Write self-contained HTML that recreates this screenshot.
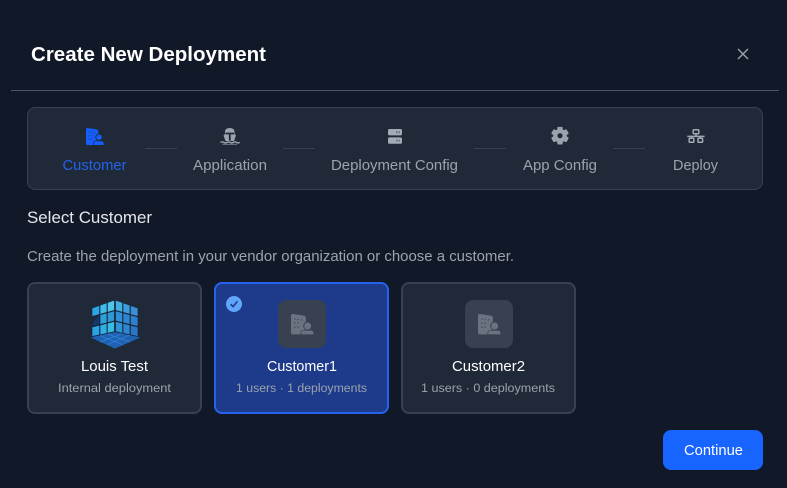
<!DOCTYPE html>
<html lang="en">
<head>
<meta charset="utf-8">
<title>Create New Deployment</title>
<style>
html,body{margin:0;padding:0;background:#111827;width:787px;height:488px;overflow:hidden}
svg{display:block}
text{font-family:"Liberation Sans",sans-serif;white-space:pre}
</style>
</head>
<body>
<svg width="787" height="488" viewBox="0 0 787 488" xmlns="http://www.w3.org/2000/svg">
<defs>
<g id="bld">
<path d="M0 1.5Q0 0 1.5 0L10.5 1.4Q12.4 1.7 12.4 3.2V17H1.5Q0 17 0 15.5Z" fill="currentColor"/>
</g>
</defs>
<rect width="787" height="488" fill="#111827"/>
<text x="31" y="61" font-size="20.6" font-weight="700" fill="#fff" textLength="235" lengthAdjust="spacingAndGlyphs">Create New Deployment</text>
<path d="M738 49L748 59M748 49L738 59" stroke="#9ca3af" stroke-width="1.4" fill="none"/>
<rect x="11" y="90" width="768" height="1" fill="#4b5563"/>

<!-- stepper -->
<rect x="27.5" y="107.5" width="735" height="82" rx="8" fill="#1f2937" stroke="#374151"/>
<g fill="#374151">
<rect x="145" y="148" width="32" height="1"/>
<rect x="283" y="148" width="32" height="1"/>
<rect x="474" y="148" width="32" height="1"/>
<rect x="613" y="148" width="32" height="1"/>
</g>
<g font-size="14.6" fill="#9ca3af">
<text x="62.5" y="170" fill="#2563eb" textLength="64" lengthAdjust="spacingAndGlyphs">Customer</text>
<text x="193" y="170" textLength="74" lengthAdjust="spacingAndGlyphs">Application</text>
<text x="331" y="170" textLength="127" lengthAdjust="spacingAndGlyphs">Deployment Config</text>
<text x="523" y="170" textLength="74" lengthAdjust="spacingAndGlyphs">App Config</text>
<text x="673" y="170" textLength="45" lengthAdjust="spacingAndGlyphs">Deploy</text>
</g>

<!-- customer icon -->
<g transform="translate(86 128)" color="#155dfc">
<use href="#bld"/>
<g fill="#1f4fa8"><rect x="2.6" y="3.6" width="1.4" height="1.4"/><rect x="5.4" y="3.9" width="1.4" height="1.4"/><rect x="8.2" y="4.3" width="1.4" height="1.4"/><rect x="2.6" y="7" width="1.4" height="1.4"/><rect x="5.4" y="7" width="1.4" height="1.4"/><rect x="2.6" y="10.4" width="1.4" height="1.4"/><rect x="5.4" y="10.4" width="1.4" height="1.4"/></g>
<circle cx="13" cy="9.2" r="3.2" fill="#155dfc" stroke="#1f2937" stroke-width=".9"/>
<path d="M7.4 17.3V16Q7.4 12.9 10.4 12.9H15.4Q18 12.9 18 16V17.3Z" fill="#155dfc" stroke="#1f2937" stroke-width=".7"/>
</g>

<!-- ship icon -->
<g>
<path d="M223.5 135.5L225 134V132Q225 128 229.7 128Q234.5 128 234.5 132V134L236 135.5L234 141H225.5Z" fill="#9ca3af"/>
<path d="M225.5 132.6H234V134.4H230.7V140.6H228.9V134.4H225.5Z" fill="#1f2937"/>
<path d="M220.5 142.4Q222.1 141.4 223.7 142.4T226.9 142.4T230.1 142.4T233.3 142.4T236.5 142.4T239.7 142.4" fill="none" stroke="#9ca3af" stroke-width="1.4"/>
<path d="M222.5 144.3H237" stroke="#7b8494" stroke-width=".9"/>
</g>

<!-- server icon -->
<rect x="388" y="129" width="14" height="6.4" rx="1.6" fill="#a3aab6"/>
<rect x="388" y="137.4" width="14" height="6.4" rx="1.6" fill="#a3aab6"/>
<g fill="#6b7280"><rect x="396" y="131.2" width="1.5" height="2"/><rect x="398.4" y="131.2" width="1.5" height="2"/><rect x="396" y="139.6" width="1.5" height="2"/><rect x="398.4" y="139.6" width="1.5" height="2"/></g>

<!-- gear icon -->
<g transform="translate(560 135.7)" fill="#9ca3af">
<circle r="6.8"/>
<rect x="-2.7" y="-8.8" width="5.4" height="17.6" rx="1"/>
<rect x="-2.7" y="-8.8" width="5.4" height="17.6" rx="1" transform="rotate(60)"/>
<rect x="-2.7" y="-8.8" width="5.4" height="17.6" rx="1" transform="rotate(120)"/>
<circle r="2.6" fill="#1f2937"/>
</g>

<!-- network icon -->
<g fill="none" stroke="#a3aab6" stroke-width="1.5">
<rect x="693.2" y="129.7" width="5.6" height="4" rx=".8"/>
<rect x="689.2" y="138.2" width="4.6" height="4" rx=".6"/>
<rect x="698" y="138.2" width="4.6" height="4" rx=".6"/>
<path d="M687.3 136.4H704.6M696 133.8V136.4M691.5 136.4V138.2M700.3 136.4V138.2"/>
</g>

<!-- headings -->
<text x="27" y="223" font-size="16.4" fill="#e5e7eb" textLength="125" lengthAdjust="spacingAndGlyphs">Select Customer</text>
<text x="27" y="261" font-size="14.4" fill="#9ca3af" textLength="487" lengthAdjust="spacingAndGlyphs">Create the deployment in your vendor organization or choose a customer.</text>

<!-- card 1 -->
<rect x="28" y="283" width="173" height="130" rx="7" fill="#1f2937" stroke="#374151" stroke-width="2"/>
<g>
<path d="M115 332.5L92 337.5L115 348L139 337.5Z" fill="#1f62b4" stroke="#1f62b4" stroke-linejoin="round"/>
<path d="M100 335.8L122.5 344.6M107.5 334L130 342M130 334.8L107.5 344.6M122.5 333.6L100 342" stroke="#3486d4" stroke-width=".7" fill="none"/>
<g stroke="#16263f" stroke-width=".7" stroke-linejoin="round">
<g>
<polygon points="92,308 99.6,305.4 99.6,314.4 92,316.5" fill="#2ca6e4"/>
<polygon points="92,327 99.6,325.1 99.6,334.9 92,336.5" fill="#2aa4e6"/>
<polygon points="94,320 99.6,314.9 99.6,324.6 92,326" fill="#123a6a"/>
<polygon points="100,305.2 107,302.8 107,312.4 100,314.3" fill="#3fbde8"/>
<polygon points="100,314.8 107,312.9 107,322.8 100,324.5" fill="#2f9fd8"/>
<polygon points="100,325 107,323.3 107,333.3 100,334.8" fill="#2fb0e4"/>
<polygon points="107.4,302.6 114.5,300.2 114.5,310.3 107.4,312.3" fill="#4cc6ea"/>
<polygon points="107.4,312.8 114.5,310.8 114.5,320.9 107.4,322.7" fill="#2f98d2"/>
<polygon points="107.4,323.2 114.5,321.4 114.5,331.6 107.4,333.2" fill="#3abbe6"/>
</g>
<g transform="translate(230 0) scale(-1 1)">
<polygon points="92,308 99.6,305.4 99.6,314.4 92,316.5" fill="#3b8fd6"/>
<polygon points="92,317 99.6,314.9 99.6,324.6 92,326.5" fill="#2f80cc"/>
<polygon points="92,327 99.6,325.1 99.6,334.9 92,336.5" fill="#2a78c4"/>
<polygon points="100,305.2 107,302.8 107,312.4 100,314.3" fill="#3f9cdc"/>
<polygon points="100,314.8 107,312.9 107,322.8 100,324.5" fill="#2f86cf"/>
<polygon points="100,325 107,323.3 107,333.3 100,334.8" fill="#2e86ce"/>
<polygon points="107.4,302.6 114.5,300.2 114.5,310.3 107.4,312.3" fill="#42aee2"/>
<polygon points="107.4,312.8 114.5,310.8 114.5,320.9 107.4,322.7" fill="#2f8fd4"/>
<polygon points="107.4,323.2 114.5,321.4 114.5,331.6 107.4,333.2" fill="#2f94d6"/>
</g>
</g>
</g>
<text x="81" y="371" font-size="14.6" fill="#fff" textLength="67" lengthAdjust="spacingAndGlyphs">Louis Test</text>
<text x="58" y="392" font-size="12.4" fill="#9ca3af" textLength="113" lengthAdjust="spacingAndGlyphs">Internal deployment</text>

<!-- card 2 -->
<rect x="215" y="283" width="173" height="130" rx="7" fill="#1e3a8a" stroke="#2563eb" stroke-width="2"/>
<rect x="278" y="300" width="48" height="48" rx="8" fill="#374151"/>
<g transform="translate(291 314) scale(1.2)" color="#6b7280">
<use href="#bld"/>
<g fill="#4b5563"><rect x="2.6" y="3.6" width="1.2" height="1.2"/><rect x="5.4" y="3.9" width="1.2" height="1.2"/><rect x="8.2" y="4.3" width="1.2" height="1.2"/><rect x="2.6" y="7" width="1.2" height="1.2"/><rect x="5.4" y="7" width="1.2" height="1.2"/><rect x="2.6" y="10.4" width="1.2" height="1.2"/><rect x="5.4" y="10.4" width="1.2" height="1.2"/></g>
<circle cx="13.9" cy="10" r="3.3" fill="#6b7280" stroke="#374151" stroke-width=".8"/>
<path d="M8.2 17.3V16Q8.2 13.6 10.8 13.6H16.6Q19 13.6 19 16V17.3Z" fill="#6b7280" stroke="#374151" stroke-width=".6"/>
</g>
<circle cx="234" cy="304" r="8" fill="#60a5fa"/>
<path d="M230.6 304.2L233 306.6L237.4 301.4" fill="none" stroke="#1e3a8a" stroke-width="1.6"/>
<text x="267" y="371" font-size="14.6" fill="#fff" textLength="70" lengthAdjust="spacingAndGlyphs">Customer1</text>
<text x="236" y="392" font-size="12.4" fill="#9ca3af" textLength="131" lengthAdjust="spacingAndGlyphs">1 users · 1 deployments</text>

<!-- card 3 -->
<rect x="402" y="283" width="173" height="130" rx="7" fill="#1f2937" stroke="#374151" stroke-width="2"/>
<rect x="465" y="300" width="48" height="48" rx="8" fill="#374151"/>
<g transform="translate(478 314) scale(1.2)" color="#6b7280">
<use href="#bld"/>
<g fill="#4b5563"><rect x="2.6" y="3.6" width="1.2" height="1.2"/><rect x="5.4" y="3.9" width="1.2" height="1.2"/><rect x="8.2" y="4.3" width="1.2" height="1.2"/><rect x="2.6" y="7" width="1.2" height="1.2"/><rect x="5.4" y="7" width="1.2" height="1.2"/><rect x="2.6" y="10.4" width="1.2" height="1.2"/><rect x="5.4" y="10.4" width="1.2" height="1.2"/></g>
<circle cx="13.9" cy="10" r="3.3" fill="#6b7280" stroke="#374151" stroke-width=".8"/>
<path d="M8.2 17.3V16Q8.2 13.6 10.8 13.6H16.6Q19 13.6 19 16V17.3Z" fill="#6b7280" stroke="#374151" stroke-width=".6"/>
</g>
<text x="452" y="371" font-size="14.6" fill="#fff" textLength="73" lengthAdjust="spacingAndGlyphs">Customer2</text>
<text x="421" y="392" font-size="12.4" fill="#9ca3af" textLength="134" lengthAdjust="spacingAndGlyphs">1 users · 0 deployments</text>

<!-- button -->
<rect x="663" y="430" width="100" height="40" rx="8" fill="#1764ff"/>
<text x="684" y="455" font-size="14.6" fill="#fff" textLength="59" lengthAdjust="spacingAndGlyphs">Continue</text>
</svg>
</body>
</html>
